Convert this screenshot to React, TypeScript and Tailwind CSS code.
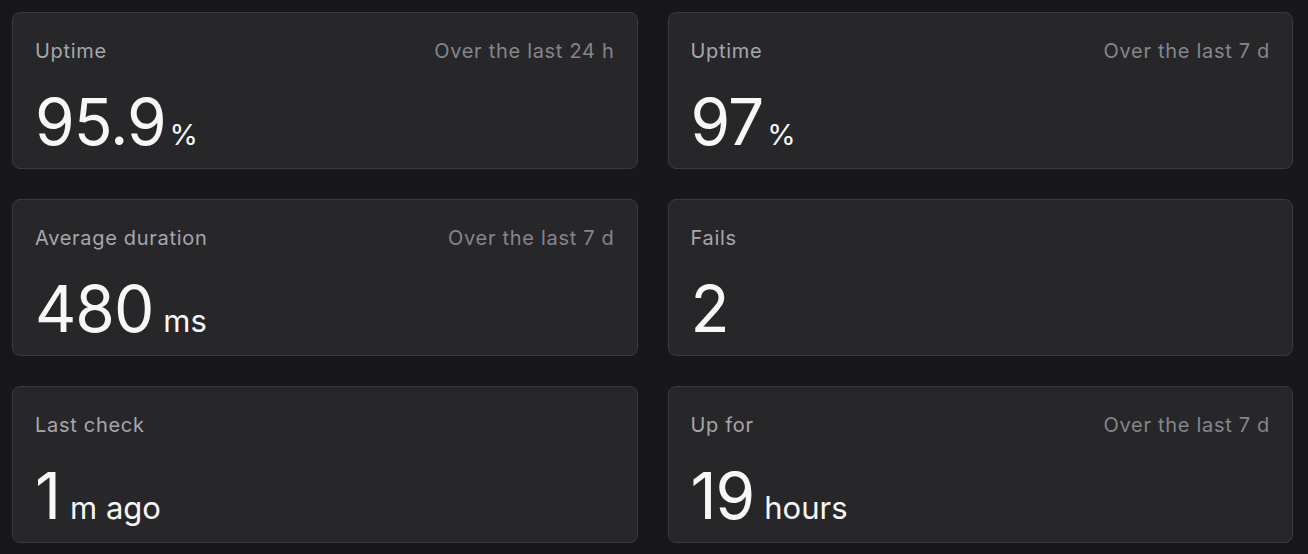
type Stat = {
  label: string
  period?: string
  value: string
  unit?: string
}

const stats: Stat[] = [
  { label: "Uptime", period: "Over the last 24 h", value: "95.9", unit: "%" },
  { label: "Uptime", period: "Over the last 7 d", value: "97", unit: "%" },
  { label: "Average duration", period: "Over the last 7 d", value: "480", unit: "ms" },
  { label: "Fails", value: "2" },
  { label: "Last check", value: "1", unit: "m ago" },
  { label: "Up for", period: "Over the last 7 d", value: "19", unit: "hours" },
]

function StatCard({ label, period, value, unit }: Stat) {
  return (
    <div className="flex flex-col rounded-lg border border-[#3a3a3e] bg-[#27272a] px-[22px] pt-6 pb-[14px]">
      <div className="flex items-center justify-between text-xl leading-7 tracking-[0.7px]">
        <span className="text-[#a6a6ad]">{label}</span>
        {period && <span className="text-[#85858c]">{period}</span>}
      </div>
      <div className="mt-[25px] flex items-baseline text-[#f7f7f8]">
        <span className="text-[64px] leading-none tracking-[-1px]">{value}</span>
        {unit && (
          <span className={unit === "%" ? "ml-1 text-[29px] leading-none" : "ml-[10px] text-[31px] leading-none"}>
            {unit}
          </span>
        )}
      </div>
    </div>
  )
}

export default function App() {
  return (
    <div
      className="min-h-screen bg-[#18181b] pt-3 pb-3 pl-3 pr-[15px]"
      style={{ fontFamily: "Inter, 'Noto Sans', sans-serif" }}
    >
      <div className="grid grid-cols-2 gap-[30px]">
        {stats.map((stat, index) => (
          <StatCard key={index} {...stat} />
        ))}
      </div>
    </div>
  )
}
